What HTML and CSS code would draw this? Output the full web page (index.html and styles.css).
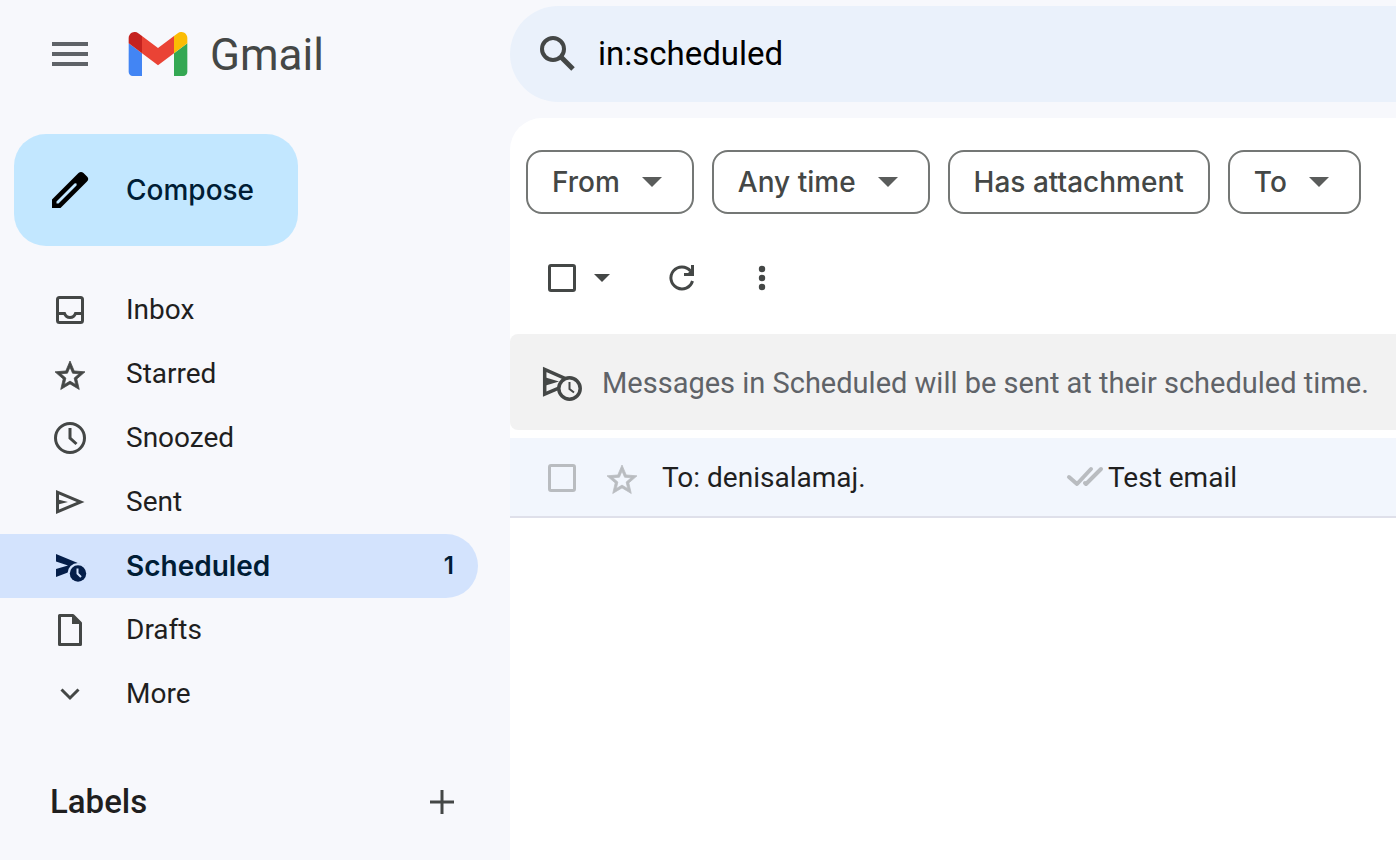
FILE: index.html
```html
<!DOCTYPE html>
<html lang="en">
<head>
    <meta charset="UTF-8">
    <meta name="viewport" content="width=device-width, initial-scale=1.0">
    <title>Gmail - Scheduled</title>
    <link rel="stylesheet" href="styles.css">
</head>
<body>
    <div class="app">
        <aside class="sidebar">
            <div class="brand">
                <button class="icon-btn" type="button" aria-label="Main menu">
                    <svg width="40" height="40" viewBox="0 0 40 40" fill="#5f6368"><path d="M2 8h36v4H2zM2 18h36v4H2zM2 28h36v4H2z"/></svg>
                </button>
                <a class="logo" href="#">
                    <svg width="60" height="44" viewBox="52 42 88 66">
                        <path fill="#4285f4" d="M58 108h14V74L52 59v43c0 3.32 2.69 6 6 6"/>
                        <path fill="#34a853" d="M120 108h14c3.32 0 6-2.69 6-6V59l-20 15"/>
                        <path fill="#fbbc04" d="M120 48v26l20-15v-8c0-7.42-8.47-11.65-14.4-7.2"/>
                        <path fill="#ea4335" d="M72 74V48l24 18 24-18v26L96 92"/>
                        <path fill="#c5221f" d="M52 51v8l20 15V48l-5.6-4.2c-5.94-4.45-14.4-.22-14.4 7.2"/>
                    </svg>
                    <span class="logo-text">Gmail</span>
                </a>
            </div>

            <button class="compose" type="button">
                <svg width="40" height="40" viewBox="0 0 40 40"><path fill="#000" fill-rule="evenodd" d="M2 38V29.500L28.500 3Q31 1 33.500 3L37 6.500Q39.500 9 37 11.500L10.500 38ZM6.500 33.500H8.500L26.500 15.500Q27.500 12.500 24.500 13.500L6.500 31.500Z"/></svg>
                Compose
            </button>

            <nav class="nav">
                <a class="nav-item" href="#">
                    <svg width="40" height="40" viewBox="0 0 40 40" fill="none" stroke="#444746" stroke-width="3"><rect x="7.500" y="7.500" width="25" height="25" rx="2"/><path d="M7.500 23.500H14.500Q16 27.500 20 27.500T25.500 23.500H32.500"/></svg>
                    <span class="nav-label">Inbox</span>
                </a>
                <a class="nav-item" href="#">
                    <svg width="40" height="40" viewBox="0 0 40 40" fill="#444746" stroke="#444746" stroke-width=".5"><path transform="translate(2 4) scale(1.500)" d="M22 9.240l-7.190-.620L12 2 9.190 8.630 2 9.240l5.460 4.730L5.820 21 12 17.270 18.180 21l-1.630-7.030L22 9.240zM12 15.400l-3.760 2.270 1-4.280-3.320-2.880 4.380-.380L12 6.100l1.710 4.040 4.380.380-3.320 2.880 1 4.280L12 15.400z"/></svg>
                    <span class="nav-label">Starred</span>
                </a>
                <a class="nav-item" href="#">
                    <svg width="40" height="40" viewBox="0 0 40 40" fill="none" stroke="#444746" stroke-width="3"><circle cx="20" cy="20" r="14.500"/><path d="M20 10V20L26.500 26"/></svg>
                    <span class="nav-label">Snoozed</span>
                </a>
                <a class="nav-item" href="#">
                    <svg width="40" height="40" viewBox="0 0 40 40" fill="#444746"><path transform="translate(1.500 2) scale(1.500)" d="M3 20V4l19 8-19 8Zm2-3 11.850-5L5 7v3.500l6 1.500-6 1.500V17Z"/></svg>
                    <span class="nav-label">Sent</span>
                </a>
                <a class="nav-item active" href="#">
                    <svg width="40" height="40" viewBox="0 0 40 40"><path fill="#041e49" d="M6 8L35 20L6 31V23L18 19.500L6 15.500Z"/><circle cx="28" cy="27.500" r="10.500" fill="#d3e3fd"/><circle cx="28" cy="27.500" r="8.200" fill="#041e49"/><path d="M27.500 22.500V27.500L31 31" fill="none" stroke="#d3e3fd" stroke-width="2"/></svg>
                    <span class="nav-label">Scheduled</span>
                    <span class="nav-count">1</span>
                </a>
                <a class="nav-item" href="#">
                    <svg width="40" height="40" viewBox="0 0 40 40"><path fill="none" stroke="#444746" stroke-width="3" stroke-linejoin="round" d="M9.500 5.500H23L30.500 13V34.500H9.500Z"/><path fill="#444746" d="M22 5L31 14H22Z"/></svg>
                    <span class="nav-label">Drafts</span>
                </a>
                <a class="nav-item" href="#">
                    <svg width="40" height="40" viewBox="0 0 40 40" fill="none" stroke="#444746" stroke-width="3"><path d="M11.500 15.500L20 24L28.500 15.500"/></svg>
                    <span class="nav-label">More</span>
                </a>
            </nav>

            <div class="labels">
                <h2>Labels</h2>
                <button class="icon-btn" type="button" aria-label="Create new label">
                    <svg width="40" height="40" viewBox="0 0 40 40" fill="none" stroke="#444746" stroke-width="3"><path d="M20 8V32M8 20H32"/></svg>
                </button>
            </div>
        </aside>

        <main class="main">
            <form class="search">
                <button class="icon-btn" type="button" aria-label="Search">
                    <svg width="40" height="40" viewBox="0 0 40 40" fill="none" stroke="#444746" stroke-width="4"><circle cx="15" cy="15" r="11"/><path stroke-width="5" d="M23 23L35 35"/></svg>
                </button>
                <input class="search-input" type="text" aria-label="Search mail" value="in:scheduled">
            </form>

            <section class="panel">
                <div class="chips">
                    <button class="chip" type="button">From <span class="caret"></span></button>
                    <button class="chip" type="button">Any time <span class="caret"></span></button>
                    <button class="chip" type="button">Has attachment</button>
                    <button class="chip" type="button">To <span class="caret"></span></button>
                </div>

                <div class="toolbar">
                    <input class="check" type="checkbox" aria-label="Select all">
                    <button class="icon-btn select-menu" type="button" aria-label="Select options"><span class="caret small"></span></button>
                    <button class="icon-btn" type="button" aria-label="Refresh">
                        <svg width="40" height="40" viewBox="0 0 40 40"><path fill="none" stroke="#444746" stroke-width="3" d="M30.500 23A11 11 0 1 1 28.500 13"/><path fill="#444746" d="M32 7V18H22V15H26L29 12V7Z"/></svg>
                    </button>
                    <button class="icon-btn" type="button" aria-label="More options">
                        <svg width="40" height="40" viewBox="0 0 40 40" fill="#444746"><circle cx="20" cy="11" r="3.200"/><circle cx="20" cy="20" r="3.200"/><circle cx="20" cy="29" r="3.200"/></svg>
                    </button>
                </div>

                <div class="notice">
                    <svg width="40" height="40" viewBox="0 0 40 40" fill="none" stroke="#444746" stroke-width="3.500"><path d="M2.700 6.500V31L31 19Z"/><path fill="#444746" stroke="none" d="M2 14L17 18.500L2 23Z"/><circle cx="27.500" cy="25.500" r="10.700" fill="#f2f2f2"/><path stroke-width="2" d="M27.500 19V26L32 29.500"/></svg>
                    <p>Messages in Scheduled will be sent at their scheduled time.</p>
                </div>

                <ul class="mail-list">
                    <li class="mail">
                        <input class="check light" type="checkbox" aria-label="Select message">
                        <button class="icon-btn" type="button" aria-label="Star message">
                            <svg width="40" height="40" viewBox="0 0 40 40" fill="#b9bcc0" stroke="#b9bcc0" stroke-width=".5"><path transform="translate(2 4) scale(1.500)" d="M22 9.240l-7.190-.620L12 2 9.190 8.630 2 9.240l5.460 4.730L5.820 21 12 17.270 18.180 21l-1.630-7.030L22 9.240zM12 15.400l-3.760 2.270 1-4.280-3.320-2.880 4.380-.380L12 6.100l1.710 4.040 4.380.380-3.320 2.880 1 4.280L12 15.400z"/></svg>
                        </button>
                        <span class="mail-to">To: denisalamaj.</span>
                        <svg width="40" height="40" viewBox="0 0 40 40" fill="none" stroke="#b9bcc0" stroke-width="4" stroke-linecap="round" stroke-linejoin="round"><path d="M3 19L11 26L25 11M19 25L20 26L35 11"/></svg>
                        <a class="mail-subject" href="#">Test email</a>
                    </li>
                </ul>
            </section>
        </main>
    </div>
</body>
</html>
```

FILE: styles.css
```css
* {
    margin: 0;
    padding: 0;
    box-sizing: border-box;
}

body {
    font-family: Roboto, 'Noto Sans', sans-serif;
    font-size: 28px;
    line-height: 40px;
    color: #1f1f1f;
    background: #f7f8fc;
    overflow-x: hidden;
}

a {
    color: inherit;
    text-decoration: none;
}

button,
input {
    font: inherit;
    color: inherit;
    border: none;
    background: none;
}

button {
    cursor: pointer;
}

svg {
    display: block;
    flex-shrink: 0;
}

.app {
    display: flex;
    min-height: 100vh;
}

.icon-btn {
    display: flex;
    align-items: center;
    justify-content: center;
    width: 40px;
    height: 40px;
    flex-shrink: 0;
}

/* Sidebar */
.sidebar {
    width: 510px;
    flex-shrink: 0;
}

.brand {
    display: flex;
    align-items: center;
    gap: 38px;
    height: 108px;
    padding-left: 50px;
}

.logo {
    display: flex;
    align-items: center;
    gap: 22px;
}

.logo-text {
    font-size: 44px;
    line-height: 44px;
    padding-top: 2px;
    color: #444746;
}

.compose {
    display: flex;
    align-items: center;
    gap: 36px;
    height: 112px;
    margin: 26px 0 32px 14px;
    padding: 0 44px 0 36px;
    border-radius: 32px;
    background: #c2e7ff;
    color: #001d35;
    font-family: Inter, Roboto, sans-serif;
    font-weight: 500;
}

.nav-item {
    display: flex;
    align-items: center;
    gap: 36px;
    height: 64px;
    margin-right: 32px;
    padding: 0 24px 0 50px;
    border-radius: 0 32px 32px 0;
}

.nav-label {
    flex: 1;
}

.nav-item.active {
    background: #d3e3fd;
    color: #001d35;
    font-family: Inter, Roboto, sans-serif;
    font-weight: 600;
}

.nav-count {
    font-size: 24px;
}

.labels {
    display: flex;
    align-items: center;
    justify-content: space-between;
    height: 64px;
    margin-top: 44px;
    padding: 0 48px 0 50px;
}

.labels h2 {
    font-size: 33px;
    font-weight: 500;
}

/* Main column */
.main {
    display: flex;
    flex-direction: column;
    flex: 1;
    min-width: 0;
    padding-top: 6px;
}

.search {
    display: flex;
    align-items: center;
    gap: 20px;
    height: 96px;
    padding-left: 28px;
    border-radius: 48px 0 0 48px;
    background: #eaf1fb;
}

.search-input {
    flex: 1;
    min-width: 0;
    font-size: 33px;
    color: #000;
    outline: none;
}

.panel {
    flex: 1;
    margin-top: 16px;
    padding-top: 32px;
    border-radius: 32px 0 0 0;
    background: #fff;
}

.chips {
    display: flex;
    gap: 18px;
    padding-left: 16px;
}

.chip {
    display: flex;
    align-items: center;
    gap: 22px;
    height: 64px;
    padding: 0 24px;
    border: 2px solid #747775;
    border-radius: 16px;
    color: #444746;
    font-family: Inter, Roboto, sans-serif;
    font-weight: 500;
    white-space: nowrap;
}

.caret {
    margin-right: 6px;
    border: 10px solid transparent;
    border-top-color: #5a5c5b;
    border-bottom: none;
}

.caret.small {
    margin: 0;
    border-width: 8px;
    border-bottom: none;
    border-top-color: #444746;
}

.toolbar {
    display: flex;
    align-items: center;
    gap: 40px;
    height: 128px;
    padding-left: 38px;
}

.select-menu {
    margin-left: -34px;
}

.check {
    appearance: none;
    width: 28px;
    height: 28px;
    border: 3px solid #444746;
    border-radius: 3px;
    flex-shrink: 0;
}

.check.light {
    border-color: #b9bcc0;
}

.notice {
    display: flex;
    align-items: center;
    gap: 20px;
    height: 96px;
    margin-top: -8px;
    padding: 2px 0 0 32px;
    border-radius: 8px 0 0 8px;
    background: #f2f2f2;
    color: #5f6368;
    font-size: 29px;
    white-space: nowrap;
}

.mail-list {
    margin-top: 8px;
    list-style: none;
}

.mail {
    display: flex;
    align-items: center;
    height: 80px;
    padding: 2px 0 0 38px;
    border-bottom: 2px solid #dfe0ea;
    background: #f2f6fd;
    white-space: nowrap;
}

.mail .icon-btn {
    margin: 0 20px 0 26px;
}

.mail-to {
    width: 404px;
}

.mail-subject {
    margin-left: 2px;
}
```
